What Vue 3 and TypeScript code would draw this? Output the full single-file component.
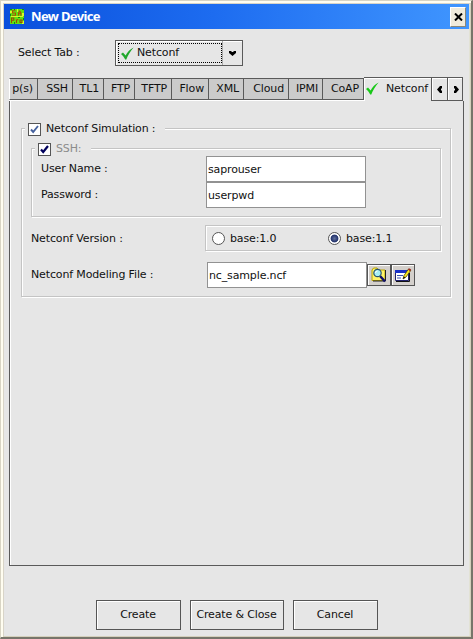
<script setup lang="ts">
import { ref } from 'vue'

interface Tab {
  label: string
  width: number
}

const tabs: Tab[] = [
  { label: 'p(s)', width: 29 },
  { label: 'SSH', width: 35 },
  { label: 'TL1', width: 31 },
  { label: 'FTP', width: 31 },
  { label: 'TFTP', width: 37 },
  { label: 'Flow', width: 37 },
  { label: 'XML', width: 35 },
  { label: 'Cloud', width: 45 },
  { label: 'IPMI', width: 34 },
  { label: 'CoAP', width: 41 },
]

const userName = ref('saprouser')
const password = ref('userpwd')
const modelingFile = ref('nc_sample.ncf')
const version = ref('1.1')
</script>

<template>
  <div class="window">
    <header class="titlebar">
      <svg class="logo" width="14" height="15" viewBox="0 0 14 15">
        <rect width="14" height="15" fill="#62e010" />
        <path d="M0 2h2v2H0zM7 0h1v3H7zM12 4h2v3h-2zM1 7h12v1H1zM6 10h1v4H6zM12 12h2v3h-2z" fill="#d8f828" />
        <path d="M5.500 1.800H2.500V4h3v2.300H2M8.500 6.800V4l1.200-2 1.200 2v2.800M8.500 4.800h2.500" fill="none" stroke="#a85400" stroke-width="1.100" />
        <path d="M1.500 14V9h2.300v2.300H1.500M6.500 14v-3.300h1.800M10 11h2v2.500h-2z" fill="none" stroke="#984a00" stroke-width="1.100" />
        <path d="M0 0h2v1H0zM4 0h1v1H4zM12 0h2v1h-2zM0 5h1v2H0zM4 13h1v2H4zM8 8h2v1H8zM13 9h1v2h-1z" fill="#0a8c14" />
      </svg>
      <span class="title">New Device</span>
      <button class="close" aria-label="Close">
        <svg width="9" height="8" viewBox="0 0 9 8"><path d="M1 .5 8 7.500M8 .5 1 7.500" stroke="#000" stroke-width="2" /></svg>
      </button>
    </header>

    <div class="select-row">
      <span class="select-label">Select Tab :</span>
      <div class="combo">
        <div class="combo-value">
          <svg width="13" height="13" viewBox="0 0 13 13"><path d="M0 7 2 5.600 4.600 8.500C6.500 5 9 2 12.600.5 9.500 4 7 8 5.300 12.500H4.200C3.200 10.500 1.800 8.500 0 7z" fill="#20a82c" /></svg>
          <span>Netconf</span>
        </div>
        <div class="combo-arrow">
          <svg width="7" height="5" viewBox="0 0 7 5"><path d="M0 0h2.500v1h2V0H7v2L3.500 5 0 2z" /></svg>
        </div>
      </div>
    </div>

    <section class="tabs">
      <nav class="strip">
        <div v-for="(t, i) in tabs" :key="t.label" class="tab" :class="{ first: i === 0 }" :style="{ width: t.width + 'px' }">{{ t.label }}</div>
        <div class="tab active">
          <svg width="13" height="13" viewBox="0 0 13 13"><path d="M0 7 2 5.600 4.600 8.500C6.500 5 9 2 12.600.5 9.500 4 7 8 5.300 12.500H4.200C3.200 10.500 1.800 8.500 0 7z" fill="#18c818" /></svg>
          <span>Netconf</span>
        </div>
        <button class="scroll" aria-label="Previous"><svg width="5" height="7" viewBox="0 0 5 7"><path d="M5 0v2.500H4v2h1V7H3L0 3.500 3 0z" /></svg></button>
        <button class="scroll last" aria-label="Next"><svg width="5" height="7" viewBox="0 0 5 7"><path d="M0 0v2.500h1v2H0V7h2l3-3.500L2 0z" /></svg></button>
      </nav>

      <div class="panel">
        <div class="group outer">
          <div class="legend">
            <span class="check"><svg width="9" height="9" viewBox="0 0 9 9"><path d="M1 4.500 3.200 7 8 1" fill="none" stroke="#46629e" stroke-width="1.900" /></svg></span>
            <span>Netconf Simulation :</span>
          </div>
          <div class="group inner">
            <div class="legend muted">
              <span class="check"><svg width="9" height="9" viewBox="0 0 9 9"><path d="M1 4.500 3.200 7 8 1" fill="none" stroke="#00005c" stroke-width="2.200" /></svg></span>
              <span>SSH:</span>
            </div>
            <div class="field"><label>User Name :</label><input v-model="userName" type="text" /></div>
            <div class="field"><label>Password :</label><input v-model="password" type="text" /></div>
          </div>

          <div class="version-row">
            <label>Netconf Version :</label>
            <div class="radios">
              <div class="radio" @click="version = '1.0'"><i :class="{ on: version === '1.0' }"></i><span>base:1.0</span></div>
              <div class="radio" @click="version = '1.1'"><i :class="{ on: version === '1.1' }"></i><span>base:1.1</span></div>
            </div>
          </div>

          <div class="file-row">
            <label>Netconf Modeling File :</label>
            <input v-model="modelingFile" type="text" />
            <button class="tool" aria-label="Browse">
              <svg width="18" height="16" viewBox="0 0 18 16">
                <path d="M2 3 3.500 1H7l1.500 2H15v10.500H2z" fill="#fff46a" stroke="#b8a400" />
                <path d="M15.500 3v11H3" fill="none" stroke="#222" />
                <path d="m10 9 5 5.500" stroke="#101068" stroke-width="2.500" />
                <circle cx="7.500" cy="6" r="3.700" fill="#a8f0f4" stroke="#28546c" stroke-width="1.200" />
                <path d="M5.500 6q0-2 2-2" fill="none" stroke="#fff" />
              </svg>
            </button>
            <button class="tool" aria-label="Edit">
              <svg width="18" height="16" viewBox="0 0 18 16">
                <path d="M1.500 3.500h13v10h-13z" fill="#fff" stroke="#20206c" />
                <path d="M1 3h14v3H1z" fill="#1830c8" />
                <path d="M3 8.500h6M3 11h4" stroke="#3850b0" />
                <path d="M2 14.500h13.500V6" fill="none" stroke="#111" />
                <path d="m9 12 1-3.500L14.500 2l2.200 1.500L12 10z" fill="#f8e820" stroke="#4a4200" stroke-width=".8" />
                <path d="m9 12 .8-2.500 1.600 1z" fill="#111" />
                <path d="m14 2.700 1-1.500 2.200 1.400-1 1.600z" fill="#a02820" />
              </svg>
            </button>
          </div>
        </div>
      </div>
    </section>

    <footer class="actions">
      <button class="btn">Create</button>
      <button class="btn wide">Create &amp; Close</button>
      <button class="btn">Cancel</button>
    </footer>
  </div>
</template>

<style>
body {
  margin: 0;
  background: #e6e6e6;
}
</style>

<style scoped>
* {
  box-sizing: border-box;
}
.window {
  display: flex;
  flex-direction: column;
  width: 473px;
  height: 639px;
  padding: 1px 2px 0 1px;
  border: solid;
  border-width: 1px 2px 2px 1px;
  border-color: #d8d4c4 #77756a #77756a #d8d4c4;
  background: #e6e6e6;
  box-shadow: inset 2px 2px 0 #fffdf0, inset -1px -1px 0 #d4d0bc, inset 3px 3px 0 #d8d4c8, inset -2px 0 0 #e2e2d4;
  color: #111;
  font: 11px/14px "DejaVu Sans", sans-serif;
  letter-spacing: -0.14px;
  white-space: nowrap;
  overflow: hidden;
}
button,
input {
  margin: 0;
  padding: 0;
  color: inherit;
  font: inherit;
  letter-spacing: inherit;
  border-radius: 0;
}
svg {
  display: block;
  flex: none;
}
.titlebar {
  display: flex;
  align-items: center;
  flex: none;
  height: 25px;
  margin: 2px 0 0 2px;
  padding: 0 3px 0 6px;
  background: linear-gradient(90deg, #0a50dc, #1d6cf0 45%, #4096ff);
}
.title {
  flex: 1;
  margin-left: 7px;
  color: #fff;
  font: bold 13px/25px "Noto Sans", sans-serif;
  letter-spacing: -0.65px;
}
.close {
  display: flex;
  align-items: center;
  justify-content: center;
  width: 16px;
  height: 20px;
  border: 1px solid;
  border-color: #fff #8a8878 #8a8878 #fff;
  background: #f0ebdc;
}
.select-row {
  display: flex;
  align-items: center;
  flex: none;
  height: 26px;
  margin: 11px 0 0 16px;
}
.select-label {
  width: 97px;
}
.combo {
  display: flex;
  width: 128px;
  height: 26px;
  border: 1px solid #5a5a5a;
  box-shadow: inset 1px 1px 0 #fff;
}
.combo-value {
  display: flex;
  align-items: center;
  gap: 3px;
  width: 104px;
  height: 20px;
  margin: 2px 0 2px 2px;
  padding-left: 2px;
  border: 1px dotted #000;
}
.combo-arrow {
  display: flex;
  align-items: center;
  justify-content: center;
  flex: 1;
  border-left: 1px solid #aaa;
}
.tabs {
  display: flex;
  flex-direction: column;
  flex: none;
  width: 455px;
  height: 489px;
  margin: 11px 0 0 7px;
}
.strip {
  display: flex;
  align-items: flex-end;
  flex: none;
  height: 24px;
}
.tab {
  flex: none;
  height: 22px;
  margin-bottom: 1px;
  padding-right: 4px;
  border-top: 1px solid #5a5a5a;
  border-right: 1px solid #5a5a5a;
  border-bottom: 1px solid #5a5a5a;
  background: #cbcbcb;
  box-shadow: 0 1px 0 #fff;
  line-height: 19px;
  text-align: right;
}
.tab.first {
  border-left: 1px solid #fff;
}
.tab.active {
  display: flex;
  align-items: center;
  gap: 7px;
  width: 68px;
  height: 24px;
  margin-bottom: 0;
  padding: 0 0 2px 2px;
  border-bottom: 0;
  background: #e6e6e6;
  box-shadow: inset 1px 1px 0 #fff;
}
.scroll {
  display: flex;
  align-items: center;
  justify-content: center;
  flex: none;
  width: 16px;
  height: 24px;
  border: 1px solid #5a5a5a;
  border-left-width: 0;
  background: #e6e6e6;
  box-shadow: inset 1px 1px 0 #fff;
}
.scroll.last {
  width: 15px;
  padding-left: 3px;
}
.panel {
  flex: 1;
  padding: 27px 12px 0 11px;
  border: 1px solid #5a5a5a;
  border-top: 0;
  box-shadow: inset 1px 0 0 #fff;
}
.group {
  border: 1px solid #c4c4c4;
  box-shadow: 1px 1px 0 #fff, inset 1px 1px 0 #fff;
}
.outer {
  width: 430px;
  height: 169px;
}
.inner {
  width: 410px;
  height: 69px;
  margin: 12px 0 0 9px;
}
.legend {
  display: flex;
  align-items: center;
  gap: 5px;
  width: 140px;
  height: 14px;
  margin: -7px 0 0 3px;
  padding-left: 3px;
  background: #e6e6e6;
}
.inner .legend {
  width: 56px;
}
.muted {
  color: #8c8c8c;
}
.check {
  display: flex;
  align-items: center;
  justify-content: center;
  width: 13px;
  height: 13px;
  border: 1px solid #555;
  background: #fff;
}
input {
  width: 160px;
  height: 26px;
  padding-left: 1px;
  border: 1px solid #929292;
  background: #fff;
  outline: 0;
}
.field {
  display: flex;
  align-items: center;
  height: 26px;
  padding-left: 9px;
}
.field label {
  width: 165px;
}
.version-row,
.file-row {
  display: flex;
  align-items: center;
  height: 26px;
  padding-left: 9px;
}
.version-row {
  margin-top: 8px;
}
.file-row {
  margin-top: 11px;
}
.version-row label {
  width: 174px;
  padding-top: 1px;
}
.file-row label {
  width: 176px;
  padding-bottom: 1px;
}
.radios {
  display: flex;
  width: 236px;
  height: 26px;
  padding-left: 6px;
  border: 1px solid #c4c4c4;
  box-shadow: 1px 1px 0 #fff, inset 1px 1px 0 #fff;
}
.radio {
  display: flex;
  align-items: center;
  flex: none;
  gap: 5px;
  width: 116px;
}
.radio span {
  padding-top: 1px;
}
.radio i {
  width: 13px;
  height: 13px;
  border: 1px solid #555;
  border-radius: 50%;
  background: #fff;
}
.radio i.on {
  background: radial-gradient(circle at 50% 50%, #60709c 0, #2c3c74 3px, #1f2f68 3.5px, #fff 4.3px);
}
.tool {
  display: flex;
  align-items: center;
  justify-content: center;
  width: 24px;
  height: 22px;
  border: 1px solid #555;
  background: #d4d0cc;
  box-shadow: inset 1px 1px 0 #fff;
}
.actions {
  display: flex;
  flex: none;
  gap: 9px;
  margin: 34px 0 0 94px;
}
.btn {
  width: 85px;
  height: 30px;
  padding-right: 1px;
  border: 1px solid #555;
  background: #e6e6e6;
  box-shadow: inset 1px 1px 0 #fff;
}
.btn.wide {
  width: 94px;
}
</style>
